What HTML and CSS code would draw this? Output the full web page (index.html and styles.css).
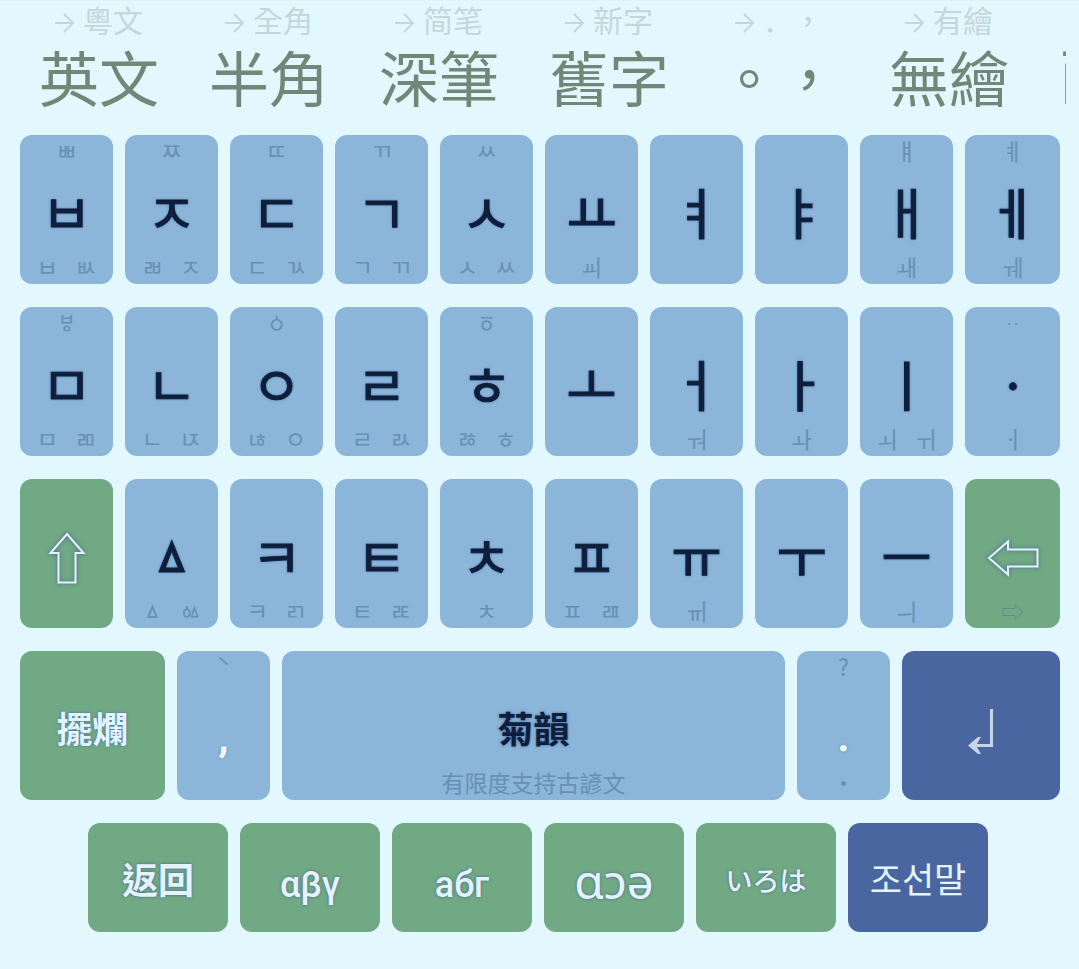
FILE: index.html
```
<!DOCTYPE html>
<html lang="zh-Hant">
<head>
<meta charset="utf-8">
<meta name="viewport" content="width=device-width, initial-scale=1">
<title>조선말</title>
<link rel="stylesheet" href="styles.css">
<script src="keys.js" defer></script>
</head>
<body>
<svg class="defs" aria-hidden="true">
  <symbol id="arrow" viewBox="0 0 20 20"><path d="M0 10h18M9 1l9 9-9 9" fill="none" stroke="currentColor" stroke-width="2"/></symbol>
</svg>
<main class="keyboard">
  <nav class="modes" id="modes"></nav>
  <div class="row letters" id="row1"></div>
  <div class="row letters" id="row2"></div>
  <div class="row letters" id="row3"></div>
  <div class="row bottom">
    <button class="key green"><span class="hint"></span><span class="main word">擺爛</span><span class="hint pair"></span></button>
    <button class="key"><span class="hint">ˋ</span><span class="main punct">,</span><span class="hint pair"></span></button>
    <button class="key"><span class="hint"></span><span class="main word">菊韻</span><span class="hint pair note">有限度支持古諺文</span></button>
    <button class="key"><span class="hint">?</span><span class="main punct">.</span><span class="hint pair">·</span></button>
    <button class="key blue" aria-label="Enter"><span class="hint"></span><span class="main"><svg class="enter" viewBox="0 0 26 46"><path d="M23.500 0v36.500H7" fill="none" stroke="currentColor" stroke-width="3"/><path d="M0 36.500 10 28h3L8 36.500 13 45h-3z" fill="currentColor"/></svg></span><span class="hint pair"></span></button>
  </div>
  <div class="row layouts">
    <button class="key green"><span class="label han">返回</span></button>
    <button class="key green"><span class="label greek">αβγ</span></button>
    <button class="key green"><span class="label greek">абг</span></button>
    <button class="key green"><span class="label ipa">ɑɔə</span></button>
    <button class="key green"><span class="label kana">いろは</span></button>
    <button class="key blue"><span class="label hangul">조선말</span></button>
  </div>
</main>
</body>
</html>
```
FILE: keys.js
```
const modes = [
  ["粵文", "英文"], ["全角", "半角"], ["简笔", "深筆"],
  ["新字", "舊字"], ['<span class="stop" lang="ja">．</span>，', "。，"], ["有繪", "無繪"], ["", "兩"]
];

// Each key: top hint, main letter, bottom hints
const rows = {
  row1: [["ㅃ","ㅂ","ㅂ ㅄ"],["ㅉ","ㅈ","ㄼ ㅈ"],["ㄸ","ㄷ","ㄷ ㄳ"],["ㄲ","ㄱ","ㄱ ㄲ"],["ㅆ","ㅅ","ㅅ ㅆ"],
    ["","ㅛ","ㆉ"],["","ㅕ",""],["","ㅑ",""],["ㅒ","ㅐ","ㅙ"],["ㅖ","ㅔ","ㅞ"]],
  row2: [["ㅸ","ㅁ","ㅁ ㄻ"],["","ㄴ","ㄴ ㄵ"],["ㆁ","ㅇ","ㄶ ㅇ"],["","ㄹ","ㄹ ㄽ"],["ㆆ","ㅎ","ㅀ ㅎ"],
    ["","ㅗ",""],["","ㅓ","ㅝ"],["","ㅏ","ㅘ"],["","ㅣ","ㅚ ㅟ"],["ᆢ","ㆍ","ㆎ"]],
  row3: [["","up",""],["","ㅿ","ㅿ ㆃ"],["","ㅋ","ㅋ ㄺ"],["","ㅌ","ㅌ ㄾ"],["","ㅊ","ㅊ"],
    ["","ㅍ","ㅍ ㄿ"],["","ㅠ","ㆌ"],["","ㅜ",""],["","ㅡ","ㅢ"],["","back","del"]]
};

const icons = {
  up: '<svg class="shift" viewBox="0 0 38 52"><path d="M19 2 35.500 21H27.500V50.500H10.500V21H2.500z" fill="none" stroke="currentColor" stroke-width="2"/></svg>',
  back: '<svg class="back" viewBox="0 0 52 38"><path d="M2 19 21 2.500V10.500H50.500V27.500H21V35.500z" fill="none" stroke="currentColor" stroke-width="2"/></svg>',
  del: '<svg class="del" viewBox="0 0 22 16"><path d="M21 8 13 1V4.500H1V11.500H13V15z" fill="none" stroke="currentColor"/></svg>'
};

document.getElementById("modes").innerHTML = modes.map(([next, now]) =>
  `<button class="mode"><span class="next">${next ? `<svg class="arrow"><use href="#arrow"/></svg><span>${next}</span>` : ""}</span><span class="now">${now}</span></button>`
).join("");

for (const [id, keys] of Object.entries(rows)) {
  document.getElementById(id).innerHTML = keys.map(([top, main, bottom]) => {
    const hints = bottom.split(" ").map(h => `<span>${icons[h] || h}</span>`).join("");
    const green = icons[main] ? ` green" aria-label="${main}` : "";
    return `<button class="key${green}"><span class="hint">${top}</span><span class="main">${icons[main] || main}</span><span class="hint pair">${hints}</span></button>`;
  }).join("");
}
```
FILE: styles.css
```
* { box-sizing: border-box; }
body {
  margin: 0;
  background: #e3f7fe;
  font-family: "Noto Sans CJK KR", sans-serif;
}
button { border: 0; padding: 0; margin: 0; background: none; font: inherit; color: inherit; }
.defs { display: none; }
svg { display: block; }

.keyboard {
  display: flex;
  flex-direction: column;
  gap: 23px;
  padding: 0 19px 37px 20px;
  border-top: 1px solid #e8f0f4;
}

.modes {
  display: flex;
  margin: 0 -6px 0 -6px;
  overflow-x: clip;
  height: 111px;
  font-family: "Noto Sans CJK TC", sans-serif;
  text-spacing-trim: space-all;
}
.mode {
  display: flex;
  flex-direction: column;
  flex: none;
  width: 170px;
  text-align: center;
}
.mode:last-child { padding-left: 25px; text-align: left; }
.next {
  display: flex;
  justify-content: center;
  gap: 8px;
  height: 36px;
  font-size: 30px;
  line-height: 36px;
  color: #c3d7dc;
}
.stop { font-family: "Noto Sans CJK JP", sans-serif; }
.arrow { width: 20px; height: 20px; margin-top: 12px; }
.now { display: block; font-size: 60px; line-height: 78px; color: #718878; white-space: nowrap; }

.row { display: grid; gap: 12px; }
.letters { grid-template-columns: repeat(9, 93fr) 95fr; }
.bottom { grid-template-columns: 145fr 93fr 503fr 93fr 158fr; }
.layouts { display: flex; justify-content: center; padding-right: 4px; }

.key {
  display: flex;
  flex-direction: column;
  min-width: 0;
  border-radius: 12px;
  background: #8bb5d9;
  color: #0d1f3a;
}
.green { background: #70a984; color: #e3f4fe; }
.blue { background: #4a66a0; color: #c8d4e8; }

.hint {
  display: flex;
  justify-content: center;
  width: 100%;
  height: 32px;
  font-size: 23px;
  line-height: 30px;
  font-weight: 400;
  color: #6790b4;
}
.pair { gap: 17px; line-height: 28px; }
.main {
  display: flex;
  align-items: center;
  justify-content: center;
  width: 100%;
  height: 85px;
  font-size: 55px;
  line-height: 80px;
  font-weight: 400;
  -webkit-text-stroke: 1px currentColor;
  text-shadow: 0 0 3px #4a68a8;
}
.note { font-family: "Noto Sans CJK TC", sans-serif; }
.word {
  padding-top: 3px;
  font-family: "Noto Sans CJK TC", sans-serif;
  font-size: 36px;
  font-weight: 700;
  -webkit-text-stroke: 0;
}
.punct { padding-top: 26px; font-family: "Roboto", sans-serif; font-size: 36px; font-weight: 700; line-height: 48px; color: #eef8ff; }
.shift { width: 38px; height: 52px; margin-top: 8px; filter: drop-shadow(0 0 2px #4a5a90); }
.back { width: 52px; height: 38px; margin-top: 8px; filter: drop-shadow(0 0 2px #4a5a90); }
.del { width: 22px; height: 16px; margin-top: 8px; color: #5c8f92; }
.enter { width: 26px; height: 46px; margin-top: 12px; }

.layouts .key { flex: 0 1 140px; height: 109px; align-items: center; justify-content: center; }
.label { font-size: 36px; line-height: 48px; text-shadow: 0 0 3px #4a5a90; }
.han { font-family: "Noto Sans CJK TC", sans-serif; font-weight: 700; }
.greek { padding-top: 14px; font-family: "Roboto", sans-serif; font-weight: 500; }
.ipa { padding-top: 6px; font-family: "Noto Sans", sans-serif; font-size: 48px; }
.kana { padding-top: 4px; font-family: "Noto Sans CJK JP", sans-serif; font-size: 27px; font-weight: 500; }
.hangul { font-size: 35px; font-weight: 400; color: #e3f4fe; text-shadow: none; }
```
